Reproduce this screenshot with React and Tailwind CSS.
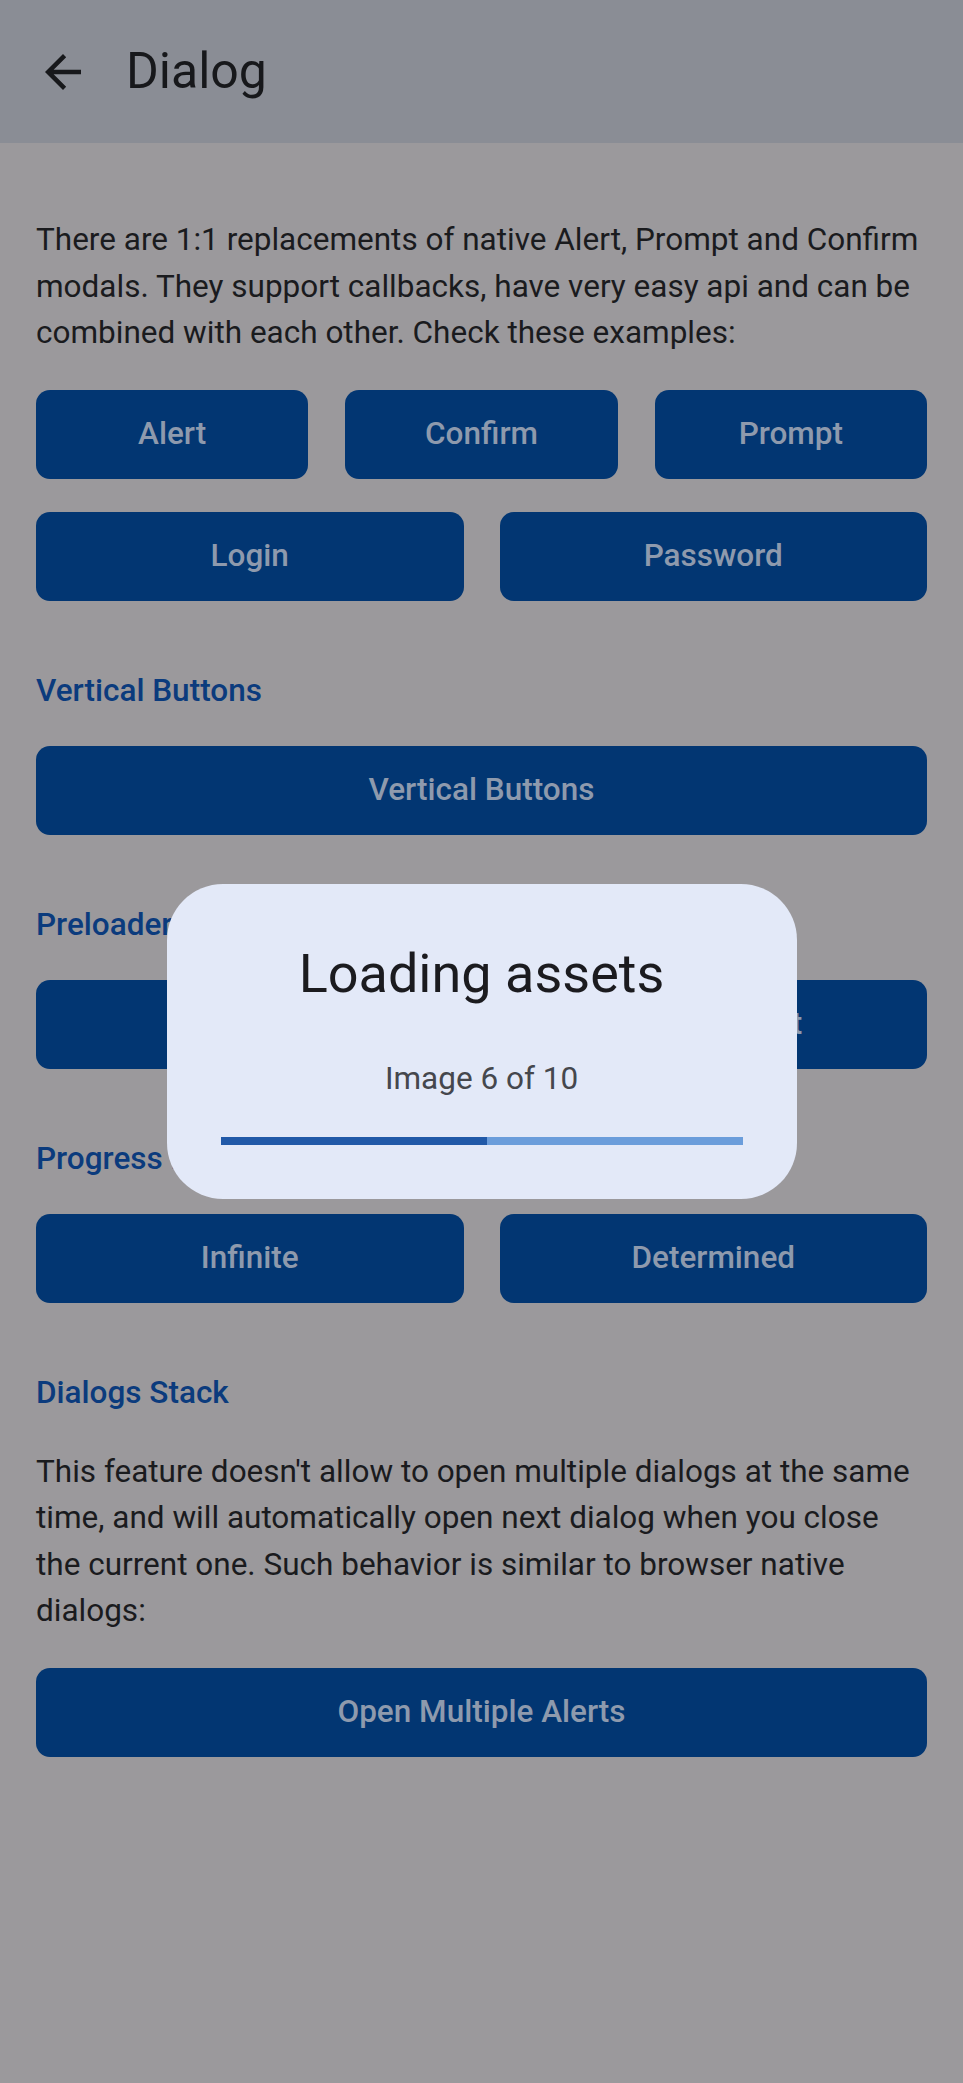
// App.jsx
import React from "react";

function BackIcon() {
	return (
		<svg width="54" height="54" viewBox="0 0 24 24" fill="#17181b">
			<path d="M20 11H7.83l5.59-5.59L12 4l-8 8 8 8 1.41-1.41L7.83 13H20v-2z" />
		</svg>
	);
}

function Btn({ children }) {
	return (
		<button className="h-[89px] w-full rounded-[14px] bg-[#023672] text-[31.5px] font-medium text-[#8e9aad]">
			{children}
		</button>
	);
}

function Heading({ children }) {
	return (
		<h2 className="mt-[72px] text-[31.5px] leading-[36px] font-medium text-[#0b3b7d]">
			{children}
		</h2>
	);
}

export default function App() {
	return (
		<div className="relative min-h-[2083px] bg-[#9b999c] font-['Roboto',sans-serif]">
			{/* Navbar */}
			<header className="flex h-[143px] items-center bg-[#8a8d95] pl-[36px]">
				<BackIcon />
				<h1 className="ml-[36px] text-[50px] text-[#17181b]">Dialog</h1>
			</header>

			<main className="px-[36px] pt-[74px]">
				<p className="text-[31.5px] leading-[46.5px] text-[#1a1b1e]">
					There are 1:1 replacements of native Alert, Prompt and Confirm modals. They support
					callbacks, have very easy api and can be combined with each other. Check these
					examples:
				</p>
				<div className="mt-[33px] grid grid-cols-3 gap-x-[37px]">
					<Btn>Alert</Btn>
					<Btn>Confirm</Btn>
					<Btn>Prompt</Btn>
				</div>
				<div className="mt-[33px] grid grid-cols-2 gap-x-[36px]">
					<Btn>Login</Btn>
					<Btn>Password</Btn>
				</div>

				<Heading>Vertical Buttons</Heading>
				<div className="mt-[37px]">
					<Btn>Vertical Buttons</Btn>
				</div>

				<Heading>Preloader Dialog</Heading>
				<div className="mt-[37px] grid grid-cols-2 gap-x-[36px]">
					<Btn>Preloader</Btn>
					<Btn>Custom Text</Btn>
				</div>

				<Heading>Progress Bar</Heading>
				<div className="mt-[37px] grid grid-cols-2 gap-x-[36px]">
					<Btn>Infinite</Btn>
					<Btn>Determined</Btn>
				</div>

				<Heading>Dialogs Stack</Heading>
				<p className="mt-[38px] text-[31.5px] leading-[46.5px] text-[#1a1b1e]">
					This feature doesn't allow to open multiple dialogs at the same time, and will
					automatically open next dialog when you close the current one. Such behavior is
					similar to browser native dialogs:
				</p>
				<div className="mt-[33px]">
					<Btn>Open Multiple Alerts</Btn>
				</div>
			</main>

			{/* Progress dialog */}
			<div className="fixed inset-0 flex items-center justify-center">
				<div className="w-[630px] rounded-[56px] bg-[#e3e9f8] px-[54px] pt-[59px] pb-[54px] text-center">
					<div className="text-[54px] leading-[62px] text-[#1b1b1f]">Loading assets</div>
					<div className="mt-[51px] text-[31.5px] leading-[46px] text-[#45474d]">Image 6 of 10</div>
					<div className="mt-[35px] h-[8px] bg-[#6b9ddb]">
						<div className="h-full w-[51%] bg-[#2159a8]" />
					</div>
				</div>
			</div>
		</div>
	);
}
